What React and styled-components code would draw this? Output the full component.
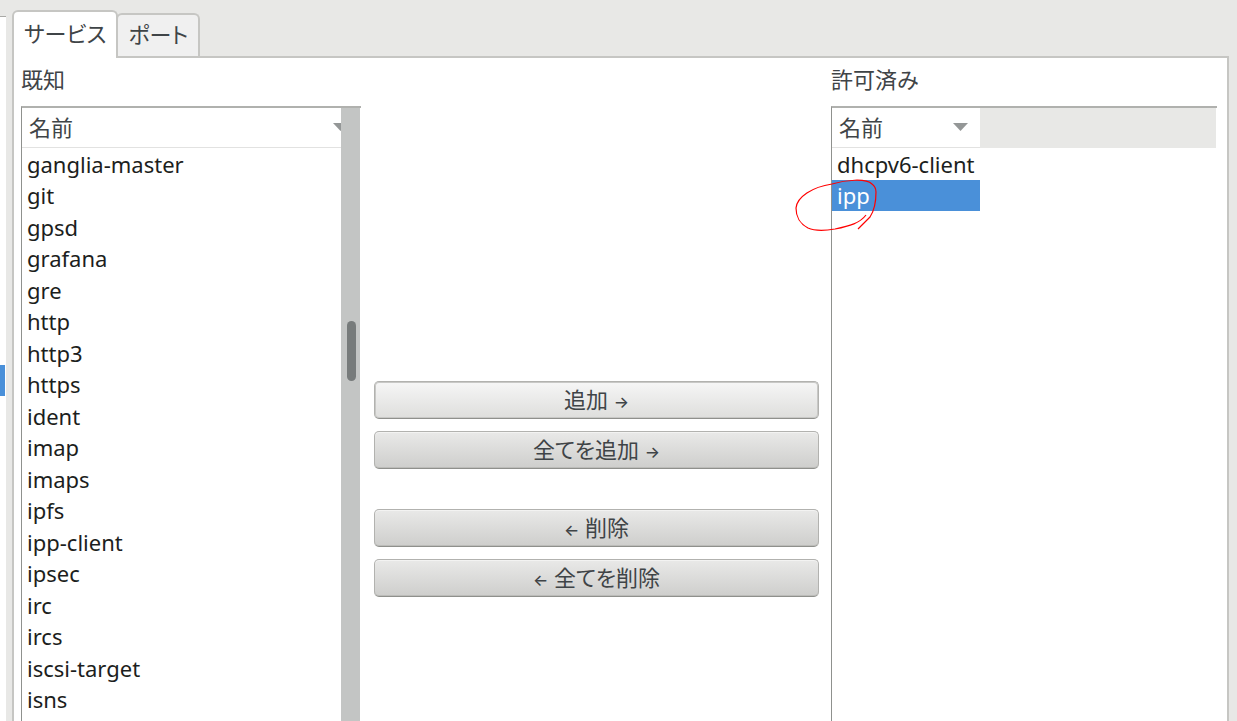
import { useState } from "react";
import styled, { createGlobalStyle } from "styled-components";

const GlobalStyle = createGlobalStyle`
  * {
    box-sizing: border-box;
  }
  body {
    margin: 0;
    background: #e8e8e6;
    color: #3f4447;
    font-family: "Noto Sans", "Noto Sans CJK JP", sans-serif;
    font-size: 22px;
    font-feature-settings: "palt";
    line-height: 30px;
  }
  button {
    font: inherit;
    font-feature-settings: inherit;
    color: inherit;
  }
`;

const Page = styled.div`
  display: flex;
  height: 100vh;
  overflow: hidden;
`;

const SidePane = styled.aside`
  flex: none;
  width: 6px;
  margin-top: 16px;
  padding-top: 348px;
  background: #fff;
  border-top: 1px solid #a9a9a6;
`;

const SideSelection = styled.div`
  width: 5px;
  height: 31px;
  background: #4a90d9;
`;

const Notebook = styled.main`
  flex: 1;
  min-width: 0;
  display: flex;
  flex-direction: column;
  margin: 10px 8px 0 6px;
`;

const Tabs = styled.div`
  display: flex;
  align-items: flex-end;
`;

const Tab = styled.button`
  height: ${(props) => (props.$active ? 48 : 43)}px;
  margin-bottom: ${(props) => (props.$active ? -2 : 0)}px;
  margin-left: ${(props) => (props.$active ? 0 : -2)}px;
  padding: 0 10px ${(props) => (props.$active ? 4 : 3)}px;
  background: ${(props) => (props.$active ? "#fff" : "#f0f0f0")};
  border: 2px solid #c6c6c3;
  border-bottom: 0;
  border-radius: 6px 6px 0 0;
  z-index: ${(props) => (props.$active ? 1 : 0)};
`;

const Panel = styled.section`
  flex: 1;
  min-height: 0;
  display: flex;
  padding: 6px 10px 0 7px;
  background: #fff;
  border: 2px solid #c6c6c3;
  border-bottom: 0;
`;

const Column = styled.div`
  flex: 0 1 ${(props) => props.$basis}px;
  min-width: 0;
  display: flex;
  flex-direction: column;
`;

const Title = styled.h2`
  margin: 0 0 12px;
  font-size: 22px;
  font-weight: 400;
  line-height: 30px;
`;

const Frame = styled.div`
  flex: 1;
  min-height: 0;
  display: flex;
  align-items: stretch;
  padding-right: 1px;
  border-top: 2px solid #b0b1ae;
  border-left: 1px solid #8f918e;
`;

const Table = styled.table`
  flex: 1;
  min-width: 0;
  align-self: flex-start;
  table-layout: fixed;
  border-collapse: separate;
  border-spacing: 0;
  color: #1c1e20;
`;

const HeadCell = styled.th`
  width: ${(props) => props.$width};
  height: 40px;
  padding: 0 0 2px;
  border-bottom: 1px solid #e2e2e1;
  font-weight: 400;
  overflow: hidden;
`;

const SortButton = styled.button`
  display: flex;
  align-items: center;
  justify-content: space-between;
  width: ${(props) => (props.$clipped ? "calc(100% + 7px)" : "100%")};
  padding: 0 ${(props) => (props.$clipped ? 0 : 12)}px 0 7px;
  background: none;
  border: 0;
  color: #3f4447;
`;

const Filler = styled.td`
  padding: 0;
  background: #e8e8e6;
`;

const Row = styled.tr`
  height: 32px;

  &:nth-child(even) {
    height: 31px;
  }
`;

const Cell = styled.td`
  position: relative;
  padding: 0 0 1px 5px;
  background: ${(props) => (props.$selected ? "#4a90d9" : "transparent")};
  color: ${(props) => (props.$selected ? "#fff" : "inherit")};
  white-space: nowrap;
  cursor: default;
`;

const Mark = styled.svg`
  position: absolute;
  left: -39px;
  top: -4px;
  pointer-events: none;
`;

const Scrollbar = styled.div`
  flex: none;
  width: 19px;
  padding: 213px 4px 0 6px;
  background: #c3c5c4;
`;

const Thumb = styled.div`
  height: 60px;
  border-radius: 5px;
  background: #777b7b;
`;

const Actions = styled.div`
  flex: 1;
  min-width: 0;
  display: flex;
  flex-direction: column;
  gap: 40px;
  padding: 317px 12px 0 13px;
`;

const ActionGroup = styled.div`
  display: flex;
  flex-direction: column;
  gap: 12px;
`;

const Action = styled.button`
  height: 38px;
  padding: 0 0 2px;
  background: ${(props) =>
    props.$focused
      ? "linear-gradient(#f6f6f6, #dededc)"
      : "linear-gradient(#e9e9e8, #cececc)"};
  border: 1px solid #b2b2af;
  border-bottom-color: #8f908c;
  border-radius: 5px;
  box-shadow: ${(props) =>
    props.$focused
      ? "inset 0 0 0 1px #c8c8c6"
      : "inset 0 1px 0 #f3f3f2, inset 0 -1px 0 #bcbcb9"};
`;

const Arrow = styled.span`
  font-family: Inter, sans-serif;
  font-size: 16px;
  font-weight: 500;
  line-height: 20px;
`;

const services = [
  "ganglia-master",
  "git",
  "gpsd",
  "grafana",
  "gre",
  "http",
  "http3",
  "https",
  "ident",
  "imap",
  "imaps",
  "ipfs",
  "ipp-client",
  "ipsec",
  "irc",
  "ircs",
  "iscsi-target",
  "isns",
];

const allowed = ["dhcpv6-client", "ipp"];

const SortArrow = () => (
  <svg width="15" height="8" viewBox="0 0 15 8" aria-hidden="true">
    <path d="M0 0h15L7.500 8z" fill="#949797" />
  </svg>
);

const HandCircle = () => (
  <Mark width="86" height="58" viewBox="793 176 86 58" aria-hidden="true">
    <path
      d="M866 215C860 223 850 226 835 229Q817 232 808 228C799 223 796 217 796 208C797 197 812 187 832 184C845 180 866 178 872 184Q876 187 876 192C876 203 874 211 870 217L858 229"
      fill="none"
      stroke="#f00"
      strokeWidth="1.2"
    />
  </Mark>
);

const App = () => {
  const [tab, setTab] = useState("サービス");
  const [known, setKnown] = useState(null);
  const [selected, setSelected] = useState("ipp");

  return (
    <>
      <GlobalStyle />
      <Page>
        <SidePane>
          <SideSelection />
        </SidePane>
        <Notebook>
          <Tabs role="tablist">
            {["サービス", "ポート"].map((name) => (
              <Tab
                key={name}
                role="tab"
                aria-selected={tab === name}
                $active={tab === name}
                onClick={() => setTab(name)}
              >
                {name}
              </Tab>
            ))}
          </Tabs>
          <Panel role="tabpanel">
            <Column $basis={340}>
              <Title id="known">既知</Title>
              <Frame>
                <Table aria-labelledby="known">
                  <thead>
                    <tr>
                      <HeadCell>
                        <SortButton $clipped>
                          名前
                          <SortArrow />
                        </SortButton>
                      </HeadCell>
                    </tr>
                  </thead>
                  <tbody>
                    {services.map((name) => (
                      <Row key={name} onClick={() => setKnown(name)}>
                        <Cell $selected={known === name}>{name}</Cell>
                      </Row>
                    ))}
                  </tbody>
                </Table>
                <Scrollbar>
                  <Thumb />
                </Scrollbar>
              </Frame>
            </Column>
            <Actions>
              <ActionGroup>
                <Action $focused>
                  追加 <Arrow>→</Arrow>
                </Action>
                <Action>
                  全てを追加 <Arrow>→</Arrow>
                </Action>
              </ActionGroup>
              <ActionGroup>
                <Action>
                  <Arrow>←</Arrow> 削除
                </Action>
                <Action>
                  <Arrow>←</Arrow> 全てを削除
                </Action>
              </ActionGroup>
            </Actions>
            <Column $basis={386}>
              <Title id="allowed">許可済み</Title>
              <Frame>
                <Table aria-labelledby="allowed">
                  <thead>
                    <tr>
                      <HeadCell $width="148px">
                        <SortButton>
                          名前
                          <SortArrow />
                        </SortButton>
                      </HeadCell>
                      <Filler />
                    </tr>
                  </thead>
                  <tbody>
                    {allowed.map((name) => (
                      <Row key={name} onClick={() => setSelected(name)}>
                        <Cell $selected={selected === name}>
                          {name}
                          {name === "ipp" && <HandCircle />}
                        </Cell>
                      </Row>
                    ))}
                  </tbody>
                </Table>
              </Frame>
            </Column>
          </Panel>
        </Notebook>
      </Page>
    </>
  );
};

export default App;
